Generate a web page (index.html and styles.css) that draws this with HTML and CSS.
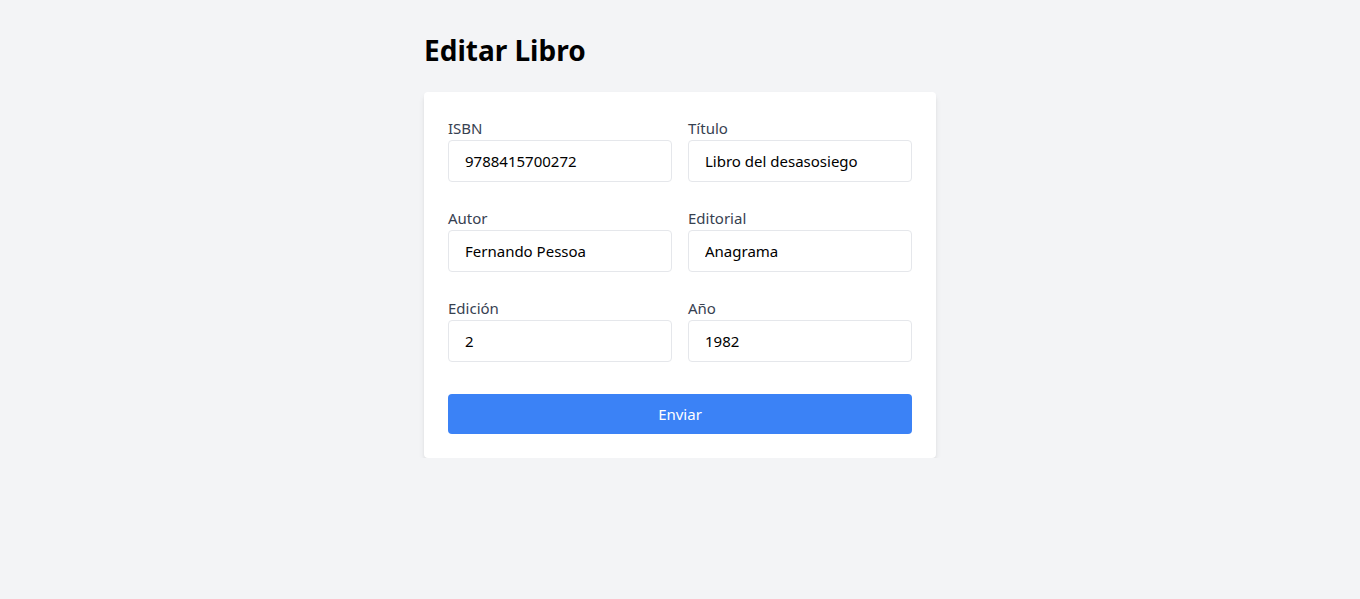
FILE: index.html
```html
<!DOCTYPE html>
<html lang="es">
<head>
<meta charset="utf-8">
<title>Editar Libro</title>
<link rel="stylesheet" href="styles.css">
</head>
<body>
<main class="container">
  <h1 class="title">Editar Libro</h1>
  <form class="card">
    <div class="grid">
      <div class="field">
        <label class="label" for="isbn">ISBN</label>
        <input class="input" id="isbn" type="text" value="9788415700272">
      </div>
      <div class="field">
        <label class="label" for="titulo">Título</label>
        <input class="input" id="titulo" type="text" value="Libro del desasosiego">
      </div>
      <div class="field">
        <label class="label" for="autor">Autor</label>
        <input class="input" id="autor" type="text" value="Fernando Pessoa">
      </div>
      <div class="field">
        <label class="label" for="editorial">Editorial</label>
        <input class="input" id="editorial" type="text" value="Anagrama">
      </div>
      <div class="field">
        <label class="label" for="edicion">Edición</label>
        <input class="input" id="edicion" type="text" value="2">
      </div>
      <div class="field">
        <label class="label" for="anio">Año</label>
        <input class="input" id="anio" type="text" value="1982">
      </div>
    </div>
    <button class="button" type="submit">Enviar</button>
  </form>
</main>
</body>
</html>
```
FILE: styles.css
```css
* { box-sizing: border-box; }
html, body { margin: 0; padding: 0; }
body {
  background: #f3f4f6;
  font-family: "Noto Sans", "Open Sans", sans-serif;
  color: #000;
}
.container {
  width: 512px;
  margin: 0 auto;
  padding-top: 32px;
}
.title {
  margin: 0 0 24px;
  font-size: 28px;
  line-height: 36px;
  font-weight: 700;
}
.card {
  background: #fff;
  border-radius: 4px;
  padding: 24px;
  box-shadow: 0 4px 6px -1px rgba(0,0,0,0.1), 0 2px 4px -2px rgba(0,0,0,0.1);
}
.grid {
  display: grid;
  grid-template-columns: minmax(0, 1fr) minmax(0, 1fr);
  column-gap: 16px;
  row-gap: 24px;
  margin-bottom: 32px;
}
.field { display: flex; flex-direction: column; min-width: 0; }
.label {
  font-size: 15px;
  line-height: 24px;
  color: #374151;
}
.input {
  width: 100%;
  min-width: 0;
  height: 42px;
  border: 1px solid #e5e7eb;
  border-radius: 4px;
  padding: 8px 16px;
  font-family: inherit;
  font-size: 15px;
  line-height: 24px;
  color: #000;
  background: #fff;
  outline: none;
}
.button {
  display: block;
  width: 100%;
  height: 40px;
  border: 0;
  border-radius: 4px;
  background: #3b82f6;
  color: #fff;
  font-family: inherit;
  font-size: 15px;
  line-height: 24px;
  cursor: pointer;
}
```
